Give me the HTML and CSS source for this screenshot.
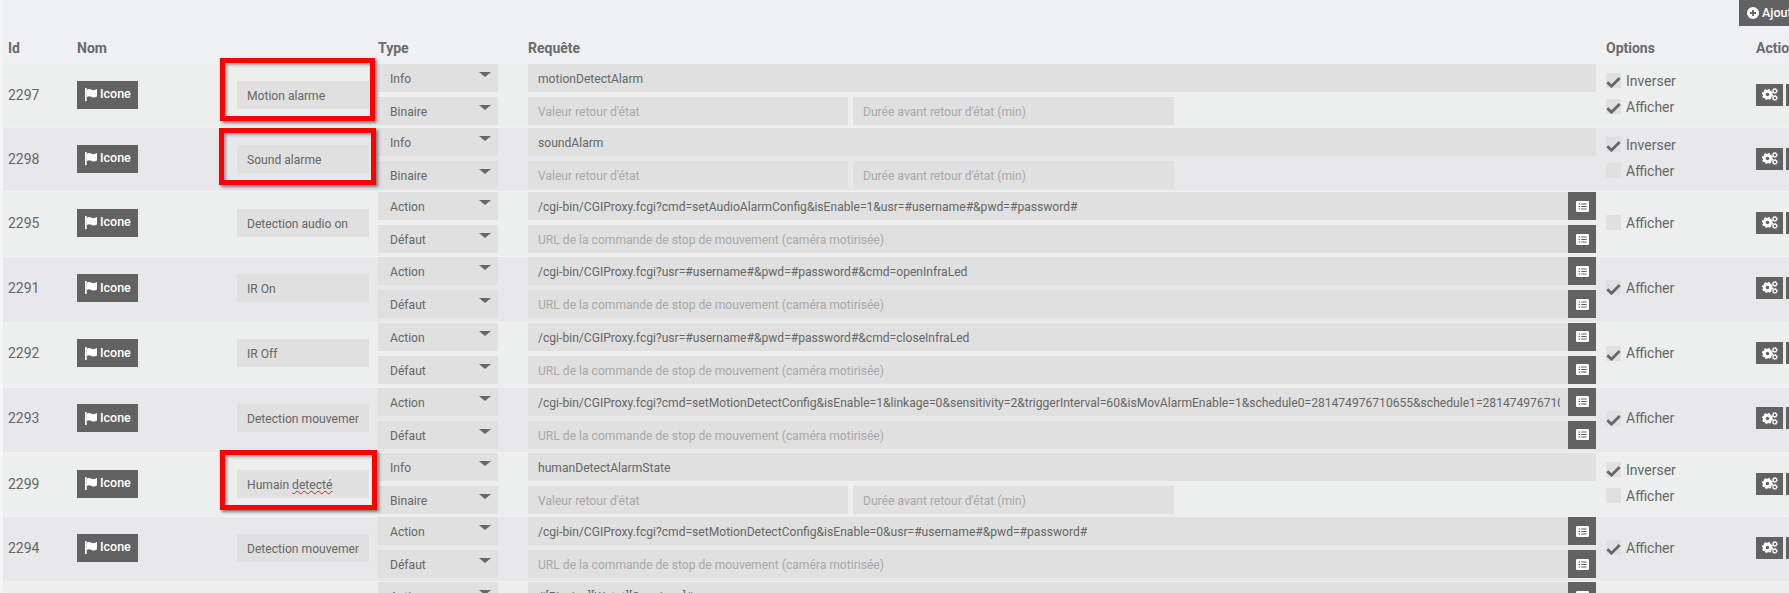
FILE: index.html
```html
<!DOCTYPE html>
<html lang="fr">
<head>
<meta charset="utf-8">
<title>Commandes</title>
<link rel="stylesheet" href="styles.css">
</head>
<body>
<svg class="defs" aria-hidden="true">
  <symbol id="flag" viewBox="0 0 12 13"><path d="M0 0h1.7v13H0z"/><path d="M1.7 1.6C3.6.4 5 .9 6.6 1.7c1.6.8 3.4.6 5.4-.6v7.4c-2 1.2-3.8 1.3-5.4.5C5 8.200 3.600 7.800 1.700 9z"/></symbol>
  <symbol id="check" viewBox="0 0 15 12"><path class="tick" d="M1.300 6.200l4.200 4 8.200-8.200"/></symbol>
  <symbol id="list" viewBox="0 0 13 11"><rect width="13" height="11" rx="1.200" class="sheet"/><path class="lines" d="M2.500 3h1.500M5.200 3h5.500M2.500 5.500h1.500M5.200 5.500h5.500M2.500 8h1.500M5.200 8h5.500"/></symbol>
  <symbol id="cogs" viewBox="0 0 16 13">
    <circle class="c1" cx="5.500" cy="6.500" r="3.300"/><circle class="t1" cx="5.500" cy="6.500" r="4.800"/>
    <circle class="c2" cx="12.800" cy="3" r="1.800"/><circle class="t2" cx="12.800" cy="3" r="2.600"/>
    <circle class="c2" cx="12.800" cy="10" r="1.800"/><circle class="t2" cx="12.800" cy="10" r="2.600"/>
  </symbol>
  <symbol id="plus" viewBox="0 0 12 12"><circle cx="6" cy="6" r="6" class="sheet"/><path class="lines thick" d="M6 3v6M3 6h6"/></symbol>
</svg>

<div class="page">
  <div class="topbar">
    <button class="btn add"><svg class="ico-plus"><use href="#plus"/></svg>Ajouter une commande</button>
  </div>

  <div class="grid head">
    <div>Id</div><div>Nom</div><div></div><div>Type</div><div>Requête</div><div class="opt-head">Options</div><div>Actions</div>
  </div>

  <div class="grid row odd info">
    <div class="id">2297</div>
    <div><button class="btn icone"><svg class="ico-flag"><use href="#flag"/></svg>Icone</button></div>
    <div class="namecell"><div class="field"><span>Motion alarme</span></div><div class="redbox box-a"></div></div>
    <div class="stack"><div class="select">Info</div><div class="select">Binaire</div></div>
    <div class="stack">
      <div class="field"><span>motionDetectAlarm</span></div>
      <div class="pair"><div class="field ph"><span>Valeur retour d'état</span></div><div class="field ph"><span>Durée avant retour d'état (min)</span></div></div>
    </div>
    <div class="options">
      <label class="opt"><span class="box"><svg><use href="#check"/></svg></span>Inverser</label>
      <label class="opt"><span class="box"><svg><use href="#check"/></svg></span>Afficher</label>
    </div>
    <div class="actions"><button class="btn act"><svg class="ico-cogs"><use href="#cogs"/></svg></button><button class="btn act"></button></div>
  </div>

  <div class="grid row even info">
    <div class="id">2298</div>
    <div><button class="btn icone"><svg class="ico-flag"><use href="#flag"/></svg>Icone</button></div>
    <div class="namecell"><div class="field"><span>Sound alarme</span></div><div class="redbox box-b"></div></div>
    <div class="stack"><div class="select">Info</div><div class="select">Binaire</div></div>
    <div class="stack">
      <div class="field"><span>soundAlarm</span></div>
      <div class="pair"><div class="field ph"><span>Valeur retour d'état</span></div><div class="field ph"><span>Durée avant retour d'état (min)</span></div></div>
    </div>
    <div class="options">
      <label class="opt"><span class="box"><svg><use href="#check"/></svg></span>Inverser</label>
      <label class="opt"><span class="box"></span>Afficher</label>
    </div>
    <div class="actions"><button class="btn act"><svg class="ico-cogs"><use href="#cogs"/></svg></button><button class="btn act"></button></div>
  </div>

  <div class="grid row odd action">
    <div class="id">2295</div>
    <div><button class="btn icone"><svg class="ico-flag"><use href="#flag"/></svg>Icone</button></div>
    <div class="namecell"><div class="field"><span>Detection audio on</span></div></div>
    <div class="stack"><div class="select">Action</div><div class="select">Défaut</div></div>
    <div class="stack">
      <div class="group"><div class="field"><span>/cgi-bin/CGIProxy.fcgi?cmd=setAudioAlarmConfig&amp;isEnable=1&amp;usr=#username#&amp;pwd=#password#</span></div><button class="btn lst"><svg class="ico-list"><use href="#list"/></svg></button></div>
      <div class="group"><div class="field ph"><span>URL de la commande de stop de mouvement (caméra motirisée)</span></div><button class="btn lst"><svg class="ico-list"><use href="#list"/></svg></button></div>
    </div>
    <div class="options"><label class="opt"><span class="box"></span>Afficher</label></div>
    <div class="actions"><button class="btn act"><svg class="ico-cogs"><use href="#cogs"/></svg></button><button class="btn act"></button></div>
  </div>

  <div class="grid row even action">
    <div class="id">2291</div>
    <div><button class="btn icone"><svg class="ico-flag"><use href="#flag"/></svg>Icone</button></div>
    <div class="namecell"><div class="field"><span>IR On</span></div></div>
    <div class="stack"><div class="select">Action</div><div class="select">Défaut</div></div>
    <div class="stack">
      <div class="group"><div class="field"><span>/cgi-bin/CGIProxy.fcgi?usr=#username#&amp;pwd=#password#&amp;cmd=openInfraLed</span></div><button class="btn lst"><svg class="ico-list"><use href="#list"/></svg></button></div>
      <div class="group"><div class="field ph"><span>URL de la commande de stop de mouvement (caméra motirisée)</span></div><button class="btn lst"><svg class="ico-list"><use href="#list"/></svg></button></div>
    </div>
    <div class="options"><label class="opt"><span class="box"><svg><use href="#check"/></svg></span>Afficher</label></div>
    <div class="actions"><button class="btn act"><svg class="ico-cogs"><use href="#cogs"/></svg></button><button class="btn act"></button></div>
  </div>

  <div class="grid row odd action">
    <div class="id">2292</div>
    <div><button class="btn icone"><svg class="ico-flag"><use href="#flag"/></svg>Icone</button></div>
    <div class="namecell"><div class="field"><span>IR Off</span></div></div>
    <div class="stack"><div class="select">Action</div><div class="select">Défaut</div></div>
    <div class="stack">
      <div class="group"><div class="field"><span>/cgi-bin/CGIProxy.fcgi?usr=#username#&amp;pwd=#password#&amp;cmd=closeInfraLed</span></div><button class="btn lst"><svg class="ico-list"><use href="#list"/></svg></button></div>
      <div class="group"><div class="field ph"><span>URL de la commande de stop de mouvement (caméra motirisée)</span></div><button class="btn lst"><svg class="ico-list"><use href="#list"/></svg></button></div>
    </div>
    <div class="options"><label class="opt"><span class="box"><svg><use href="#check"/></svg></span>Afficher</label></div>
    <div class="actions"><button class="btn act"><svg class="ico-cogs"><use href="#cogs"/></svg></button><button class="btn act"></button></div>
  </div>

  <div class="grid row even action">
    <div class="id">2293</div>
    <div><button class="btn icone"><svg class="ico-flag"><use href="#flag"/></svg>Icone</button></div>
    <div class="namecell"><div class="field"><span>Detection mouvement on</span></div></div>
    <div class="stack"><div class="select">Action</div><div class="select">Défaut</div></div>
    <div class="stack">
      <div class="group"><div class="field"><span>/cgi-bin/CGIProxy.fcgi?cmd=setMotionDetectConfig&amp;isEnable=1&amp;linkage=0&amp;sensitivity=2&amp;triggerInterval=60&amp;isMovAlarmEnable=1&amp;schedule0=281474976710655&amp;schedule1=281474976710655</span></div><button class="btn lst"><svg class="ico-list"><use href="#list"/></svg></button></div>
      <div class="group"><div class="field ph"><span>URL de la commande de stop de mouvement (caméra motirisée)</span></div><button class="btn lst"><svg class="ico-list"><use href="#list"/></svg></button></div>
    </div>
    <div class="options"><label class="opt"><span class="box"><svg><use href="#check"/></svg></span>Afficher</label></div>
    <div class="actions"><button class="btn act"><svg class="ico-cogs"><use href="#cogs"/></svg></button><button class="btn act"></button></div>
  </div>

  <div class="grid row odd info">
    <div class="id">2299</div>
    <div><button class="btn icone"><svg class="ico-flag"><use href="#flag"/></svg>Icone</button></div>
    <div class="namecell"><div class="field"><span>Humain <em class="spell">detecté</em></span></div><div class="redbox box-c"></div></div>
    <div class="stack"><div class="select">Info</div><div class="select">Binaire</div></div>
    <div class="stack">
      <div class="field"><span>humanDetectAlarmState</span></div>
      <div class="pair"><div class="field ph"><span>Valeur retour d'état</span></div><div class="field ph"><span>Durée avant retour d'état (min)</span></div></div>
    </div>
    <div class="options">
      <label class="opt"><span class="box"><svg><use href="#check"/></svg></span>Inverser</label>
      <label class="opt"><span class="box"></span>Afficher</label>
    </div>
    <div class="actions"><button class="btn act"><svg class="ico-cogs"><use href="#cogs"/></svg></button><button class="btn act"></button></div>
  </div>

  <div class="grid row even action">
    <div class="id">2294</div>
    <div><button class="btn icone"><svg class="ico-flag"><use href="#flag"/></svg>Icone</button></div>
    <div class="namecell"><div class="field"><span>Detection mouvement off</span></div></div>
    <div class="stack"><div class="select">Action</div><div class="select">Défaut</div></div>
    <div class="stack">
      <div class="group"><div class="field"><span>/cgi-bin/CGIProxy.fcgi?cmd=setMotionDetectConfig&amp;isEnable=0&amp;usr=#username#&amp;pwd=#password#</span></div><button class="btn lst"><svg class="ico-list"><use href="#list"/></svg></button></div>
      <div class="group"><div class="field ph"><span>URL de la commande de stop de mouvement (caméra motirisée)</span></div><button class="btn lst"><svg class="ico-list"><use href="#list"/></svg></button></div>
    </div>
    <div class="options"><label class="opt"><span class="box"><svg><use href="#check"/></svg></span>Afficher</label></div>
    <div class="actions"><button class="btn act"><svg class="ico-cogs"><use href="#cogs"/></svg></button><button class="btn act"></button></div>
  </div>

  <div class="grid row odd action">
    <div class="id">2300</div>
    <div><button class="btn icone"><svg class="ico-flag"><use href="#flag"/></svg>Icone</button></div>
    <div class="namecell"><div class="field"><span>Piscine</span></div></div>
    <div class="stack"><div class="select">Action</div><div class="select">Défaut</div></div>
    <div class="stack">
      <div class="group"><div class="field"><span>#[Piscine][Wstat][Consigne]#</span></div><button class="btn lst"><svg class="ico-list"><use href="#list"/></svg></button></div>
    </div>
    <div class="options"></div>
    <div class="actions"></div>
  </div>
</div>
</body>
</html>
```

FILE: styles.css
```css
* { box-sizing: border-box; }

html, body {
  height: 100%;
  margin: 0;
  overflow: hidden;
}

body {
  background: #f4f5f5;
  color: #666;
  font: 14px/20px Roboto, "Liberation Sans", sans-serif;
}

.defs { display: none; }

.page {
  width: 1900px;
  height: 100%;
  margin-left: 3px;
  background: #eff0f2;
}

.topbar {
  display: flex;
  height: 26px;
  padding-left: 1736px;
}

.btn {
  display: inline-flex;
  align-items: center;
  border: 0;
  padding: 0;
  background: #626262;
  color: #fff;
  font: 500 12.5px/1 Roboto, "Liberation Sans", sans-serif;
  white-space: nowrap;
}

.add {
  height: 26px;
  padding: 0 8px;
}

.grid {
  display: grid;
  grid-template-columns: 69px 160px 141px 150px 1068px 160px 120px;
  padding-left: 5px;
  align-items: center;
}

.head {
  height: 37px;
  padding-top: 7px;
  font-weight: 700;
  color: #6b6b6b;
}

.opt-head { padding-left: 10px; }

.row {
  padding-bottom: 3px;
  border-top: 1px solid #f0f1f1;
}
.info { height: 64px; }
.action { height: 65.25px; }
.odd { background: #edefee; }
.even { background: #e8e8ea; }

.icone {
  display: flex;
  width: 61px;
  height: 28px;
  padding-left: 8px;
}

.ico-flag {
  width: 12px;
  height: 13px;
  margin-right: 3px;
  fill: #fff;
}

.ico-plus {
  width: 12px;
  height: 12px;
  margin-right: 3px;
}

.namecell { position: relative; }

.namecell .field {
  width: 132px;
  padding-right: 10px;
}

.stack {
  display: flex;
  flex-direction: column;
  gap: 5px;
  align-self: start;
}

.select {
  display: flex;
  justify-content: space-between;
  width: 120px;
  height: 28px;
  padding: 0 7px 0 12px;
  background: #dfe0df;
  font-size: 12.1px;
  line-height: 30px;
}

.select::after {
  content: "";
  width: 0;
  height: 0;
  margin-top: 8px;
  border-style: solid;
  border-width: 5px 6px 0;
  border-color: #666 transparent transparent;
}

.field {
  height: 28px;
  padding: 0 8px 0 10px;
  background: #dfe0df;
  font-size: 12.1px;
  line-height: 30px;
}

.field > span {
  display: block;
  height: 28px;
  overflow: hidden;
  white-space: nowrap;
}

.ph { color: #a8a8a8; }

.pair {
  display: grid;
  grid-template-columns: 320px 321px;
  gap: 5px;
}

.group { display: flex; }
.group .field { flex: 1; min-width: 0; }

.lst {
  justify-content: center;
  flex: none;
  width: 28px;
  height: 28px;
}

.ico-list {
  width: 13px;
  height: 11px;
}

.sheet { fill: #fff; }

.lines {
  fill: none;
  stroke: #626262;
  stroke-width: 1.2;
}

.thick { stroke-width: 1.8; }

.options {
  display: flex;
  flex-direction: column;
  gap: 11px;
  padding-left: 10px;
}

.info .options { padding-bottom: 2px; }

.opt {
  display: flex;
  align-items: center;
  height: 15px;
}

.box {
  flex: none;
  width: 15px;
  height: 15px;
  margin-right: 5px;
  background: #dfe0df;
}

.box svg {
  display: block;
  width: 15px;
  height: 12px;
  margin-top: 3px;
}

.tick {
  fill: none;
  stroke: #666;
  stroke-width: 2.8;
}

.actions {
  display: flex;
  gap: 3px;
}

.act {
  display: flex;
  justify-content: center;
  width: 27px;
  height: 22px;
}

.ico-cogs {
  width: 16px;
  height: 13px;
}

.c1, .t1, .c2, .t2 {
  fill: none;
  stroke: #fff;
}

.c1 { stroke-width: 3; }
.t1 { stroke-width: 1.6; stroke-dasharray: 1.88 1.89; }
.c2 { stroke-width: 1.2; }
.t2 { stroke-width: .9; stroke-dasharray: 1.02 1.02; }

.spell {
  font-style: normal;
  text-decoration: underline wavy #e02020 1px;
  text-decoration-skip-ink: none;
}

.redbox {
  position: absolute;
  left: -17px;
  border: 5px solid #f00;
  box-shadow: 2px 2px 3px rgba(0, 0, 0, .5), inset 2px 2px 3px rgba(0, 0, 0, .35);
  pointer-events: none;
}

.box-a { top: -23px; width: 155px; height: 63px; }
.box-b { top: -17px; left: -18px; width: 157px; height: 57px; }
.box-c { top: -20px; width: 157px; height: 60px; }
```
